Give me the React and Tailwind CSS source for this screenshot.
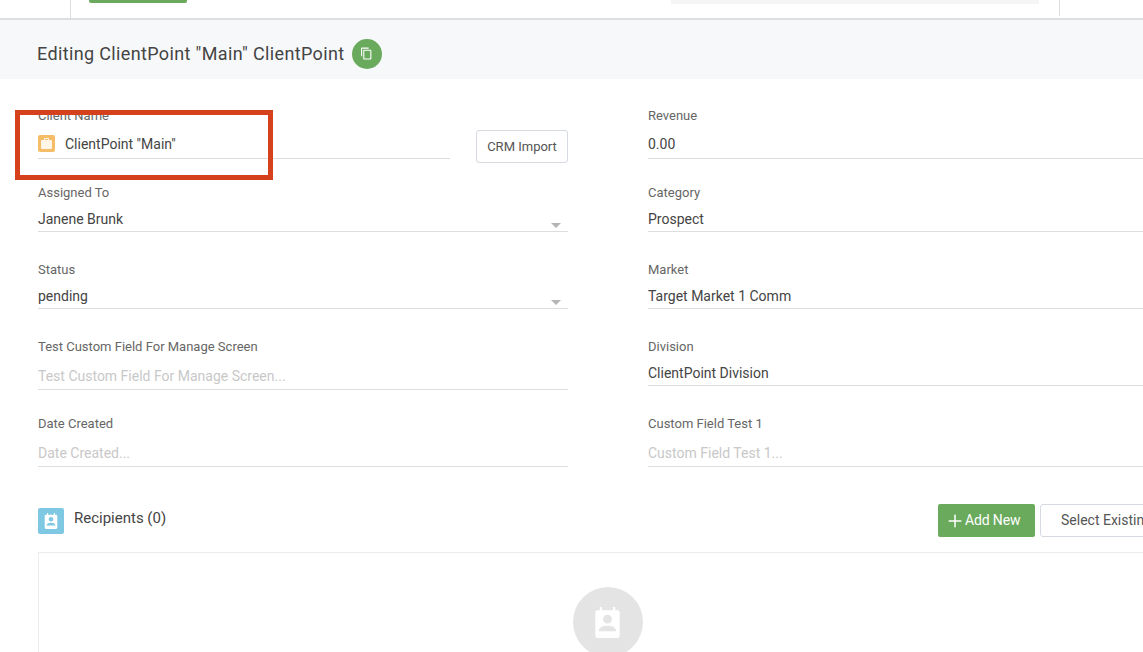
import { Plus } from "lucide-react";

// contact-book glyph used by the Recipients badge and the empty state
const ContactIcon = ({ className }) => (
  <svg viewBox="0 0 24 28" className={className} fill="currentColor">
    <path d="M5 0h2v3h10V0h2v3h2a2 2 0 0 1 2 2v21a2 2 0 0 1-2 2H3a2 2 0 0 1-2-2V5a2 2 0 0 1 2-2h2z" />
    <circle cx="12" cy="11" r="4" fill="var(--ci)" />
    <path d="M4 22c1-4 4-5 8-5s7 1 8 5z" fill="var(--ci)" />
  </svg>
);

const CopyIcon = () => (
  <svg viewBox="0 0 24 24" className="h-[13px] w-[13px]" fill="#fff">
    <path d="M16 1H4c-1.100 0-2 .9-2 2v14h2V3h12V1zm3 4H8c-1.100 0-2 .9-2 2v14c0 1.100.9 2 2 2h11c1.100 0 2-.9 2-2V7c0-1.100-.9-2-2-2zm0 16H8V7h11v14z" />
  </svg>
);

const BriefcaseIcon = () => (
  <svg viewBox="0 0 17 17" className="w-[17px] h-[17px] block">
    <rect width="17" height="17" rx="2" fill="#f5bd67" />
    <path
      fillRule="evenodd"
      d="M6 5V3.500a.5.500 0 0 1 .5-.5h4a.5.500 0 0 1 .5.500V5h2a1 1 0 0 1 1 1v7a1 1 0 0 1-1 1H4a1 1 0 0 1-1-1V6a1 1 0 0 1 1-1zm1 0h3V4H7z"
      fill="#fff6e8"
    />
  </svg>
);

const Field = ({ label, value, placeholder, select, boxClass }) => (
  <div className="h-[77px]">
    <label className="block h-[16px] text-[13px] leading-[18px] text-[#666]">{label}</label>
    <div className={`relative flex items-end border-b border-[#ddd] text-[14px] leading-[16px] ${boxClass}`}>
      {value ? (
        <span className="text-[#444]">{value}</span>
      ) : (
        <span className="text-[#c8c8c8]">{placeholder}</span>
      )}
      {select && (
        <span className="absolute right-[7px] bottom-[3px] border-x-[5px] border-t-[5px] border-x-transparent border-t-[#b5b5b5]" />
      )}
    </div>
  </div>
);

export default function App() {
  return (
    <div className="relative h-[652px] overflow-hidden bg-white font-['Roboto',sans-serif]">
      {/* top bar, cut off by the screenshot */}
      <div className="flex h-[20px] border-b-2 border-[#dcdee0] bg-white">
        <div className="w-[71px] h-[18px] border-r border-[#ddd]" />
        <div className="ml-[18px] w-[98px] h-[3px] rounded-b-[2px] bg-[#6aaa5d]" />
        <div className="ml-[484px] w-[368px] h-[4px] bg-[#f5f5f5]" />
        <div className="ml-[20px] w-px h-[16px] bg-[#ddd]" />
      </div>

      {/* page title */}
      <div className="flex h-[59px] items-center bg-[#f7f8fa] pl-[37px] pt-[8px]">
        <h1 className="text-[18px] tracking-[0.36px] font-normal text-[#444]">
          Editing ClientPoint "Main" ClientPoint
        </h1>
        <button className="ml-[7px] flex h-[30px] w-[30px] items-center justify-center rounded-full bg-[#6aaa5d]">
          <CopyIcon />
        </button>
      </div>

      {/* form */}
      <div className="grid grid-cols-[530px_1fr] gap-x-[80px] pl-[38px] pt-[28px]">
        <div>
          <div className="flex h-[77px] items-start">
            <div className="w-[412px]">
              <label className="block h-[16px] text-[13px] leading-[18px] text-[#666]">Client Name</label>
              <div className="flex h-[36px] items-end gap-[10px] border-b border-[#ddd] pb-[6px] text-[14px] leading-[16px] text-[#444]">
                <BriefcaseIcon />
                <span>ClientPoint "Main"</span>
              </div>
            </div>
            <button className="ml-[26px] mt-[23px] h-[33px] w-[92px] rounded-[3px] border border-[#d5dae0] bg-white text-[13px] text-[#555]">
              CRM Import
            </button>
          </div>
          <Field label="Assigned To" value="Janene Brunk" select boxClass="h-[32px] pb-[4px]" />
          <Field label="Status" value="pending" select boxClass="h-[32px] pb-[4px]" />
          <Field
            label="Test Custom Field For Manage Screen"
            placeholder="Test Custom Field For Manage Screen..."
            boxClass="h-[36px] pb-[5px]"
          />
          <Field label="Date Created" placeholder="Date Created..." boxClass="h-[36px] pb-[5px]" />
        </div>

        <div>
          <Field label="Revenue" value="0.00" boxClass="h-[36px] pb-[6px]" />
          <Field label="Category" value="Prospect" boxClass="h-[32px] pb-[4px]" />
          <Field label="Market" value="Target Market 1 Comm" boxClass="h-[32px] pb-[4px]" />
          <Field label="Division" value="ClientPoint Division" boxClass="h-[32px] pb-[4px]" />
          <Field label="Custom Field Test 1" placeholder="Custom Field Test 1..." boxClass="h-[36px] pb-[5px]" />
        </div>
      </div>

      {/* recipients */}
      <div className="mt-[12px] pl-[38px]">
        <div className="flex h-[48px] items-start">
          <div className="mt-[4px] flex h-[26px] w-[26px] items-center justify-center rounded-[2px] bg-[#7ec8e3] [--ci:#7ec8e3]">
            <ContactIcon className="h-[16px] w-[14px] text-white" />
          </div>
          <h2 className="ml-[10px] mt-[3px] text-[15px] leading-[22px] text-[#444]">Recipients (0)</h2>
          <div className="ml-auto flex shrink-0 gap-[5px]">
            <button className="flex h-[33px] w-[97px] items-center rounded-[2px] bg-[#6aaa5d] pl-[7px] text-[14px] tracking-[-0.14px] text-white">
              <Plus className="h-[20px] w-[20px]" strokeWidth={1.8} />
              Add New
            </button>
            <button className="-mr-[60px] h-[33px] w-[163px] rounded-[3px] border border-[#d5dae0] bg-white text-left pl-[20px] text-[14px] text-[#555]">
              Select Existing
            </button>
          </div>
        </div>
        <div className="-mr-[33px] flex h-[120px] justify-center border-l border-t border-[#ededed] pt-[34px]">
          <div className="flex h-[70px] w-[70px] shrink-0 items-center justify-center rounded-full bg-[#e4e4e4] [--ci:#e4e4e4]">
            <ContactIcon className="h-[31px] w-[27px] text-white" />
          </div>
        </div>
      </div>

      {/* red annotation drawn on the screenshot */}
      <div className="absolute left-[15px] top-[110px] h-[70px] w-[258px] border-[5px] border-[#d5411c]" />
    </div>
  );
}
